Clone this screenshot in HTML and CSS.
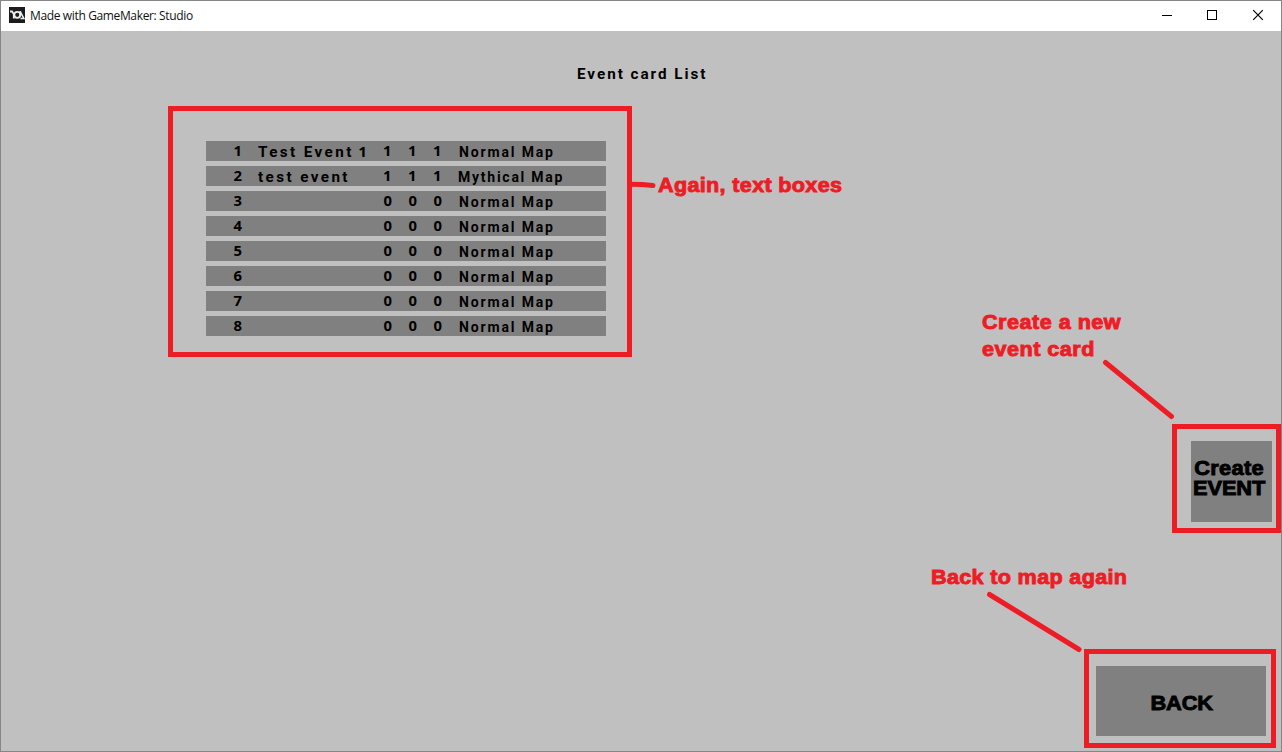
FILE: index.html
```html
<!DOCTYPE html>
<html lang="en">
<head>
<meta charset="utf-8">
<title>Made with GameMaker: Studio</title>
<link rel="stylesheet" href="styles.css">
</head>
<body>
<div class="window">
  <header class="titlebar">
    <svg class="app-icon" width="16" height="16" viewBox="0 0 16 16"><rect width="16" height="16" fill="#1c1c1c"/><path d="M1 4.500H3L5.500 8M4.800 7V11.500" fill="none" stroke="#eee" stroke-width="1.800"/><circle cx="8.300" cy="7.800" r="3" fill="none" stroke="#eee" stroke-width="1.800"/><path d="M11.300 4V9M11.500 5L14.800 11.500H11.500" fill="none" stroke="#eee" stroke-width="1.600"/></svg>
    <span class="caption">Made with GameMaker: Studio</span>
    <svg class="controls" width="138" height="30" viewBox="0 0 138 30" fill="none" stroke="#000"><path d="M19 14.500H29M64.500 9.500H73.500V18.500H64.500Z" shape-rendering="crispEdges"/><path d="M110.200 9.200L119.800 18.800M119.800 9.200L110.200 18.800" stroke-width="1.200"/></svg>
  </header>
  <main class="room">
    <h1 class="title">Event card List</h1>
    <section class="list">
      <div class="row"><b>1</b><span class="name">Test Event<i>1</i></span><b class="one">1</b><b class="one">1</b><b class="one">1</b><span class="map">Normal Map</span></div>
      <div class="row"><b>2</b><span class="name">test event</span><b class="one">1</b><b class="one">1</b><b class="one">1</b><span class="map mythical">Mythical Map</span></div>
      <div class="row"><b>3</b><span class="name"></span><b>0</b><b>0</b><b>0</b><span class="map">Normal Map</span></div>
      <div class="row"><b>4</b><span class="name"></span><b>0</b><b>0</b><b>0</b><span class="map">Normal Map</span></div>
      <div class="row"><b>5</b><span class="name"></span><b>0</b><b>0</b><b>0</b><span class="map">Normal Map</span></div>
      <div class="row"><b>6</b><span class="name"></span><b>0</b><b>0</b><b>0</b><span class="map">Normal Map</span></div>
      <div class="row"><b>7</b><span class="name"></span><b>0</b><b>0</b><b>0</b><span class="map">Normal Map</span></div>
      <div class="row"><b>8</b><span class="name"></span><b>0</b><b>0</b><b>0</b><span class="map">Normal Map</span></div>
    </section>
    <div class="actions">
      <div class="frame create"><button class="button"><span class="label">Create<br><span class="caps">EVENT</span></span></button></div>
      <div class="frame back"><button class="button"><span class="label caps">BACK</span></button></div>
    </div>
  </main>
  <svg class="pointers" width="1282" height="752" viewBox="0 0 1282 752"><path d="M631 184.300L642 184.500L653 185.500M1105.500 362.500L1171.500 416.500M989.500 594.500L1079 649.500"/></svg>
  <p class="note note-list">Again, text boxes</p>
  <p class="note note-create">Create a new<br>event card</p>
  <p class="note note-back">Back to map again</p>
</div>
</body>
</html>
```

FILE: styles.css
```css
* { box-sizing: border-box; }
body { margin: 0; }
.window {
  position: relative;
  display: flex;
  flex-direction: column;
  width: 1282px;
  height: 752px;
  border: 1px solid #868686;
  background: #c0c0c0;
  overflow: hidden;
}
.titlebar {
  display: flex;
  align-items: center;
  height: 30px;
  padding-left: 8px;
  background: #fff;
}
.app-icon { margin-top: -2px; }
.caption {
  margin-left: 5px;
  font: 12px/30px "Open Sans", "Noto Sans", sans-serif;
  letter-spacing: -0.36px;
  color: #111;
}
.controls { margin-left: auto; }
.room {
  flex: 1;
  display: flex;
  flex-direction: column;
  color: #000;
}
.title {
  margin: 33px 0 0 576px;
  font: bold 14px/20px Roboto, sans-serif;
  letter-spacing: 1.8px;
  transform: scaleX(1.09);
  transform-origin: 0 0;
}
.list {
  display: flex;
  flex-direction: column;
  gap: 5px;
  width: 464px;
  height: 251px;
  margin: 22px 0 0 167px;
  padding: 30px 0 0 33px;
  border: 5px solid #ee1c25;
}
.row {
  display: grid;
  grid-template-columns: 25px 125px 25px 25px 25px 1fr;
  width: 400px;
  height: 20px;
  padding-left: 27px;
  background: #808080;
  font: bold 14px/22px Roboto, sans-serif;
  white-space: pre;
}
.row b, .row i { font: bold 14px/20px "Noto Sans", sans-serif; }
.row b {
  justify-self: start;
  padding-left: 0.5px;
  transform: scaleX(1.06);
  transform-origin: 0 0;
}
.row i { margin-left: 4px; }
.row .one { padding-left: 0; }
.name {
  justify-self: start;
  letter-spacing: 2.2px;
  transform: scaleX(1.09);
  transform-origin: 0 0;
}
.map { padding-left: 1px; letter-spacing: 1.85px; }
.mythical { padding-left: 0; letter-spacing: 1.75px; }
.actions {
  display: flex;
  flex-direction: column;
  align-items: flex-end;
  margin-top: 67px;
}
.frame {
  display: flex;
  border: 5px solid #ee1c25;
}
.create { width: 109px; height: 109px; padding: 12px 4px 6px 14px; }
.back { width: 192px; height: 99px; margin: 116px 5px 0 0; padding: 12px 5px 7px 7px; }
.button {
  flex: 1;
  padding: 0;
  border: 0;
  background: #808080;
  color: #000;
}
.button, .note {
  font: bold 20px/20px "Liberation Sans", sans-serif;
  -webkit-text-stroke: 0.9px currentColor;
  letter-spacing: 0.3px;
  white-space: nowrap;
}
.label { display: inline-block; transform: scaleX(1.09); }
.label.caps, .label .caps { letter-spacing: -0.1px; }
.create .button { padding: 0 4px 8px 0; }
.back .button { padding: 4px 0 0 1px; }
.pointers {
  position: absolute;
  left: -1px;
  top: -1px;
  fill: none;
  stroke: #ee1c25;
  stroke-width: 5px;
  stroke-linecap: round;
}
.note {
  position: absolute;
  margin: 0;
  line-height: 27px;
  color: #ee1c25;
  transform: scaleX(1.08);
  transform-origin: 0 0;
}
.note-list { left: 657px; top: 171px; }
.note-create { left: 981px; top: 308px; letter-spacing: 0.45px; }
.note-back { left: 929.5px; top: 563px; }
```
